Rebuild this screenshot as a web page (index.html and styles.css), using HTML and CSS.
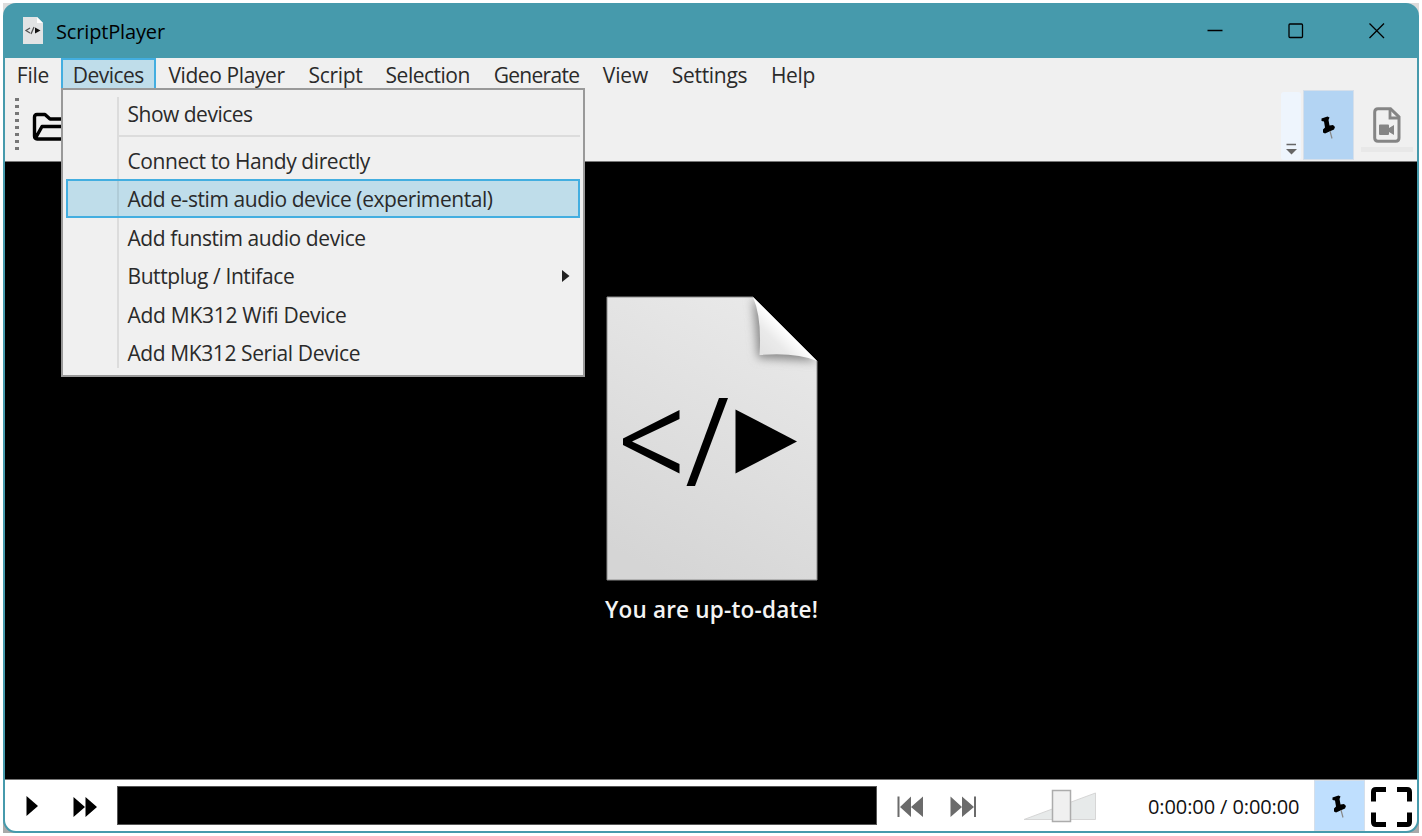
FILE: index.html
```html
<!DOCTYPE html>
<html lang="en">
<head>
<meta charset="utf-8">
<title>ScriptPlayer</title>
<link rel="stylesheet" href="styles.css">
</head>
<body>
<div class="desktop">
<div class="window">
  <header class="titlebar">
    <svg class="app-icon" width="20" height="27" viewBox="0 0 20 27">
      <path d="M0 0H14L20 6V27H0Z" fill="#e2e4e5"/>
      <path d="M14 0L20 6H14Z" fill="#fff"/>
      <path d="M7 11L3 13.500L7 16M11 10L8 17" fill="none" stroke="#555" stroke-width="1.300"/>
      <path d="M12 10.500V16.500L17.500 13.500Z" fill="#111"/>
    </svg>
    <h1 class="app-name">ScriptPlayer</h1>
    <div class="caption-buttons">
      <svg width="16" height="16" viewBox="0 0 16 16"><path d="M0.500 7.500H15.500" class="caption-line"/></svg>
      <svg width="16" height="16" viewBox="0 0 16 16"><rect x="1" y="1" width="13.500" height="13.500" rx="1" class="caption-line"/></svg>
      <svg width="16" height="16" viewBox="0 0 16 16"><path d="M0.500 0.500L15 15M15 0.500L0.500 15" class="caption-line"/></svg>
    </div>
  </header>

  <nav class="menubar">
    <div class="menu file">File</div>
    <div class="menu devices open">Devices
      <div class="dropdown">
        <div class="entry show-devices">Show devices</div>
        <div class="separator"></div>
        <div class="entry">Connect to Handy directly</div>
        <div class="entry active">Add e-stim audio device (experimental)</div>
        <div class="entry">Add funstim audio device</div>
        <div class="entry">Buttplug / Intiface
          <svg class="submenu-arrow" width="8" height="12" viewBox="0 0 8 12"><path d="M0 0L7.500 6L0 12Z" fill="#212121"/></svg>
        </div>
        <div class="entry wifi">Add MK312 Wifi Device</div>
        <div class="entry">Add MK312 Serial Device</div>
      </div>
    </div>
    <div class="menu video">Video Player</div>
    <div class="menu script">Script</div>
    <div class="menu selection">Selection</div>
    <div class="menu generate">Generate</div>
    <div class="menu view">View</div>
    <div class="menu settings">Settings</div>
    <div class="menu help">Help</div>
  </nav>

  <div class="toolbar">
    <div class="grip"></div>
    <svg class="folder" width="40" height="30" viewBox="0 0 40 30">
      <path d="M2.500 24V5Q2.500 2.500 5 2.500H13L18 7H32V13M3 27L10 14.500H38L32 27H5Q2.500 27 2.500 24" fill="none" stroke="#000" stroke-width="3.400" stroke-linejoin="round"/>
    </svg>
    <div class="toolbar-end">
      <div class="overflow">
        <svg width="11" height="12" viewBox="0 0 11 12"><path d="M0.500 1.500H10" stroke="#666" stroke-width="1.500"/><path d="M0 6H11L5.500 11.500Z" fill="#666"/></svg>
      </div>
      <div class="pin-button">
        <svg width="16" height="24" viewBox="0 0 16 24"><path d="M1.500 2.500L7.500 0.500L9.500 1.500L8.500 4L9.500 9.500L13 9L15 11L14 13.500L5 17.500L3 16.500L3 13.500L5 11.500L4 5.500L1.500 5Z" fill="#000"/><path d="M10 15L12 22.500" stroke="#888" stroke-width="1.200"/></svg>
      </div>
      <div class="video-file">
        <svg width="28" height="36" viewBox="0 0 28 36"><path d="M5 1.700H17.500L26 10V31Q26 34.300 22.700 34.300H5Q1.700 34.300 1.700 31V5Q1.700 1.700 5 1.700Z" fill="none" stroke="#858585" stroke-width="3"/><path d="M17 2V11H26" fill="none" stroke="#858585" stroke-width="2.800"/><path d="M6 18.500Q6 17.500 7 17.500H15Q16 17.500 16 18.500V21L21 18V28L16 25V27Q16 28 15 28H7Q6 28 6 27Z" fill="#858585"/></svg>
        <div class="shelf"></div>
      </div>
    </div>
  </div>

  <main class="stage">
    <svg class="logo" width="212" height="285" viewBox="0 0 212 285">
      <defs>
        <linearGradient id="paper" x1="0.700" y1="0" x2="0.300" y2="1"><stop offset="0" stop-color="#e9e9e9"/><stop offset="1" stop-color="#d5d5d5"/></linearGradient>
        <linearGradient id="fold" x1="0.150" y1="0.850" x2="0.500" y2="0.500"><stop offset="0" stop-color="#e3e3e3"/><stop offset="0.500" stop-color="#eaeaea"/><stop offset="1" stop-color="#fff"/></linearGradient>
        <filter id="soft" x="-50%" y="-50%" width="200%" height="200%"><feGaussianBlur stdDeviation="5"/></filter>
        <clipPath id="sheet"><path d="M1 1H147L211 65V284H1Z"/></clipPath>
      </defs>
      <path d="M1 1H147L211 65V284H1Z" fill="url(#paper)" stroke="#8c8c8c"/>
      <g clip-path="url(#sheet)"><path d="M147 1L152 62L211 65Z" fill="#888" filter="url(#soft)"/></g>
      <path d="M147 1Q156 22 153.500 59Q190 56 211 65Z" fill="url(#fold)"/>
      <path d="M73.500 114V123L26 145.500L73.500 168V177.500L17 149V142.500Z"/>
      <path d="M113 102H122L89 190H80.500Z"/>
      <path d="M129.500 113.500L191 145.500L129.500 177.500Z"/>
    </svg>
    <p class="status">You are up-to-date!</p>
  </main>

  <footer class="controls">
    <svg class="play" width="13" height="22" viewBox="0 0 13 22"><path d="M0.500 1L12 11L0.500 21Z"/></svg>
    <svg class="forward" width="24" height="22" viewBox="0 0 24 22"><path d="M0.500 1L12 11L0.500 21ZM12.500 1L24 11L12.500 21Z"/></svg>
    <div class="timeline"></div>
    <svg class="previous" width="28" height="22" viewBox="0 0 28 22"><path d="M0.500 0.500H2.500V21H0.500ZM14 0.500V21L3 11ZM26 0.500V21L14 11Z" fill="#6b6b6b"/></svg>
    <svg class="next" width="28" height="22" viewBox="0 0 28 22"><path d="M1.500 0.500V21L13 11ZM13 0.500V21L25 11ZM25 0.500H27V21H25Z" fill="#6b6b6b"/></svg>
    <svg class="volume" width="74" height="34" viewBox="0 0 74 34"><path d="M1 30.500L72.500 4V30.500Z" fill="#e7eaea" stroke="#d6d6d6"/><rect x="29.500" y="1.500" width="18" height="31" fill="#f0f0f0" stroke="#acacac" stroke-width="1.500"/></svg>
    <div class="time">0:00:00 / 0:00:00</div>
    <div class="pin-button bottom-pin">
      <svg width="16" height="24" viewBox="0 0 16 24"><path d="M1.500 2.500L7.500 0.500L9.500 1.500L8.500 4L9.500 9.500L13 9L15 11L14 13.500L5 17.500L3 16.500L3 13.500L5 11.500L4 5.500L1.500 5Z" fill="#000"/><path d="M10 15L12 22.500" stroke="#888" stroke-width="1.200"/></svg>
    </div>
    <svg class="fullscreen" width="41" height="40" viewBox="0 0 41 40"><path d="M2.500 14.500V5Q2.500 2.500 5 2.500H15M26 2.500H36Q38.500 2.500 38.500 5V14.500M38.500 25.500V35Q38.500 37.500 36 37.500H26M15 37.500H5Q2.500 37.500 2.500 35V25.500" fill="none" stroke="#000" stroke-width="5"/></svg>
  </footer>
</div>
</div>
</body>
</html>
```
FILE: styles.css
```css
* { box-sizing: border-box; }
body { margin: 0; background: #fff; font-family: "Open Sans", "Noto Sans", sans-serif; color: #2a2a2a; }
svg { display: block; flex: none; }
.desktop { width: 1416px; height: 830px; margin: 3px; background: linear-gradient(#dcdcdc 50%, #a9a9a9 50%); }
.window { display: flex; flex-direction: column; height: 830px; padding: 0 2px 2px; overflow: hidden; background: #469aac; border-radius: 13px; }
.titlebar { display: flex; align-items: center; flex: none; height: 55px; padding-left: 18px; color: #000; }
.app-name { margin: 2px 0 0 13px; font-size: 20px; font-weight: 400; letter-spacing: -0.15px; }
.caption-buttons { display: flex; gap: 65px; margin-left: auto; padding-right: 32px; }
.caption-line { fill: none; stroke: #000; stroke-width: 1.3; }
.menubar { display: flex; flex: none; height: 32px; background: #f0f0f0; font-size: 21px; line-height: 30px; white-space: nowrap; }
.menu { display: flex; justify-content: center; padding-top: 2px; }
.file { width: 56px; letter-spacing: -0.2px; }
.devices { position: relative; width: 94.500px; border: 2px solid #43aee0; background: #bfddea; padding-top: 0; letter-spacing: -0.5px; }
.video { width: 142px; letter-spacing: -0.4px; }
.script { width: 76px; letter-spacing: -0.3px; }
.selection { width: 108.500px; letter-spacing: -0.5px; }
.generate { width: 109px; letter-spacing: -0.7px; }
.view { width: 69px; letter-spacing: -0.1px; }
.settings { width: 99px; letter-spacing: -0.3px; }
.help { width: 68px; letter-spacing: -0.3px; }
.dropdown { position: absolute; z-index: 2; left: -2px; top: 28px; width: 524px; height: 289px; padding: 4px 3px; border: 2px solid #999; background: linear-gradient(#dcdcdc, #dcdcdc) 54px 7px / 2px 271px no-repeat #f0f0f0; letter-spacing: -0.41px; }
.entry { display: flex; align-items: center; justify-content: space-between; height: 38.500px; padding: 2px 10px 0 61.500px; }
.entry.active { padding-left: 59.500px; border: 2px solid #43aee0; background: linear-gradient(#b0ccd8, #b0ccd8) 49px 0 / 2px 100% no-repeat #bfddea; letter-spacing: -0.43px; }
.entry.show-devices { letter-spacing: -0.5px; }
.entry.wifi { letter-spacing: -0.28px; }
.separator { height: 2px; margin: 2.500px 0 3.500px 52px; background: #dcdcdc; }
.submenu-arrow { margin-top: -1px; }
.toolbar { display: flex; flex: none; height: 72px; padding-left: 10px; border-bottom: 1px solid #777; background: #f0f0f0; }
.grip { width: 4px; height: 52px; margin: 8px 13px 0 0; background: repeating-linear-gradient(#777 0 3px, transparent 3px 7px); }
.folder { margin-top: 22px; }
.toolbar-end { display: flex; margin-left: auto; }
.overflow { display: flex; align-items: flex-end; justify-content: center; width: 20px; height: 68px; margin: 2px 2px 0 0; padding-bottom: 5px; border-radius: 3px; background: #eef5fd; }
.pin-button { display: flex; align-items: center; justify-content: center; width: 51px; height: 70px; padding: 6px 2px 0 0; border: 1px solid #d5dfea; background: #b3d4f3; }
.video-file { display: flex; flex-direction: column; align-items: center; width: 53px; margin: 17px 4px 0 6px; }
.shelf { width: 52px; height: 5px; margin-top: 4px; background: #e8e8e8; }
.stage { display: flex; flex-direction: column; align-items: center; flex: 1; padding: 133.500px 0 0 1px; border-bottom: 1px solid #777; background: #000; }
.status { margin: 11px 0 0; color: #f4f4f4; font-size: 22.500px; font-weight: 600; line-height: 36px; letter-spacing: 0.2px; }
.controls { display: flex; align-items: center; flex: none; height: 51px; border-radius: 0 0 11px 11px; background: #fff; }
.play { margin-left: 21px; }
.forward { margin: 3px 0 0 34px; }
.timeline { width: 760px; height: 39px; margin-left: 20px; border: 1px solid #555; background: #000; }
.previous { margin: 3px 0 0 20px; }
.next { margin: 3px 0 0 24px; }
.volume { margin-left: 46px; }
.time { width: 153px; margin: 1px 0 0 51px; color: #111; font-size: 20px; letter-spacing: -0.1px; white-space: nowrap; }
.bottom-pin { height: 51px; margin-left: 13px; padding-top: 3px; background: #bfdffe; }
.fullscreen { margin: 3px 0 0 6px; }
```
